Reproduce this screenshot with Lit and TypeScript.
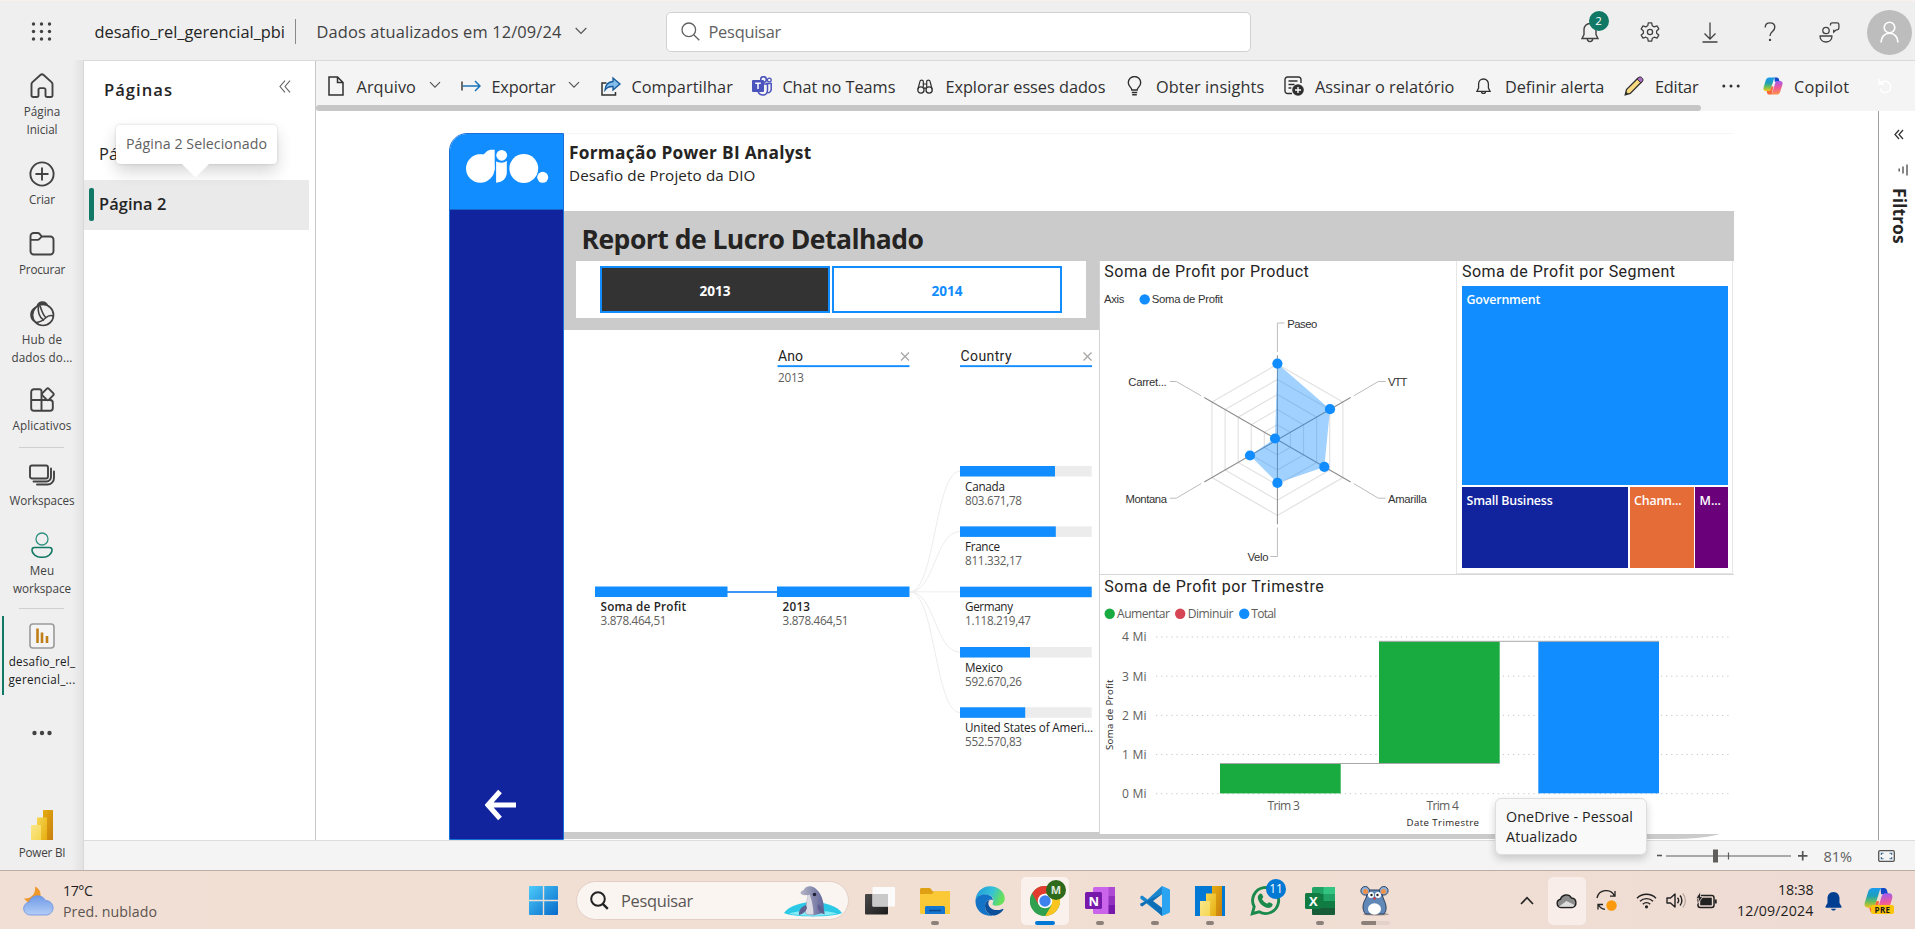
import { LitElement, html, svg, css, TemplateResult, SVGTemplateResult } from "lit";
import { customElement, property } from "lit/decorators.js";

/** A single-line label that spreads its letters over a given width. */
@customElement("fit-text")
class FitText extends LitElement {
  @property() text = "";
  @property({ type: Number }) w = 0;
  static styles = css`
    :host { display: block; white-space: nowrap; flex: none; }
    span { display: inline-block; }
  `;
  render() {
    return html`<span>${this.text}</span>`;
  }
  updated() {
    const s = this.renderRoot.querySelector("span") as HTMLElement;
    s.style.letterSpacing = "0px";
    const natural = s.getBoundingClientRect().width;
    s.style.letterSpacing = (this.w - natural) / this.text.length + "px";
  }
}

const t = (text: string, w: number, cls = "") => html`<fit-text class=${cls} .text=${text} .w=${w}></fit-text>`;

const icon = (w: number, h: number, body: SVGTemplateResult, vb = `0 0 ${w} ${h}`) =>
  html`<svg class="ic" width=${w} height=${h} viewBox=${vb} fill="none">${body}</svg>`;

const G = "#424242";

const railIcons: Record<string, TemplateResult> = {
  home: icon(26, 26, svg`<path d="M2.500 11.300c0-.9.4-1.600 1-2.200L11.400 2c.9-.8 2.300-.8 3.200 0l7.900 7.100c.6.600 1 1.300 1 2.200v10.900c0 1.100-.7 1.800-1.800 1.800h-3.400c-1 0-1.800-.8-1.800-1.800v-5.400c0-1-.7-1.700-1.700-1.700h-3.600c-1 0-1.700.7-1.700 1.700v5.400c0 1-.8 1.800-1.800 1.800H4.300c-1.100 0-1.800-.7-1.800-1.800z" stroke=${G} stroke-width="1.900"/>`),
  create: icon(26, 26, svg`<circle cx="13" cy="13" r="11.600" stroke=${G} stroke-width="1.900"/><path d="M13 7.200v11.600M7.200 13h11.600" stroke=${G} stroke-width="1.900" stroke-linecap="round"/>`),
  browse: icon(26, 26, svg`<path d="M1.500 8.500V5.200A3.200 3.200 0 0 1 4.700 2h3.900c.8 0 1.500.3 2 .9l2.200 2.600h8.500a3.200 3.200 0 0 1 3.200 3.200v11.600a3.200 3.200 0 0 1-3.200 3.200H4.700a3.200 3.200 0 0 1-3.200-3.200z" stroke=${G} stroke-width="1.900"/><path d="M1.500 8.800h7c.8 0 1.500-.3 2-.9l2.300-2.400" stroke=${G} stroke-width="1.800"/>`),
  hub: icon(26, 26, svg`<circle cx="14" cy="14" r="10.500" stroke=${G} stroke-width="1.700"/><path d="M14 3.500A10.500 10.500 0 0 0 7 21.500C4 21 1 18 1.200 13.500 1.500 9 4 6.500 7.500 5.200 8 2 10.500.2 13.500.2S18.500 2 19.500 5.200C18 4 16 3.500 14 3.500z" fill=${G}/><path d="M9.500 5c-1 5 .5 11.500 5.500 14.500M7 21.500c5-.5 6.500-1.500 9.500-4.500 2.500-2.400 5-3 8-2M11 5c2 5 3 9.500 6 11.500" stroke=${G} stroke-width="1.600"/>`),
  apps: icon(26, 26, svg`<path d="M2.200 5a2.800 2.800 0 0 1 2.800-2.800h5.500a2 2 0 0 1 2 2v8.700H2.200zM2.200 13h10.300v10.800H5A2.800 2.800 0 0 1 2.200 21zM12.500 13h8.500a2.800 2.800 0 0 1 2.800 2.800V21a2.800 2.800 0 0 1-2.800 2.800h-8.500z" stroke=${G} stroke-width="1.900"/><rect x="14.200" y="2.700" width="9.200" height="9.200" rx="1.600" transform="rotate(45 18.800 7.300)" fill="#efefef" stroke=${G} stroke-width="1.900"/>`),
  workspaces: icon(26, 26, svg`<rect x="1" y="3.500" width="18" height="13" rx="2" stroke=${G} stroke-width="1.900"/><path d="M4.500 19.500h13a4.500 4.500 0 0 0 4.500-4.500V6.500M8 22.500h10.500a6.500 6.500 0 0 0 6.500-6.500V9.500" stroke=${G} stroke-width="1.900" stroke-linecap="round"/>`),
  me: icon(26, 26, svg`<circle cx="13" cy="7" r="6" stroke="#2e9180" stroke-width="1.300"/><path d="M5.500 15.600h15c1.400 0 2.500 1.100 2.500 2.500 0 4.200-4.700 7.200-10 7.200s-10-3-10-7.200c0-1.400 1.100-2.500 2.500-2.500z" stroke="#117865" stroke-width="1.500"/>`),
  report: icon(26, 26, svg`<rect x="1" y="1" width="24" height="24" rx="3" fill="#f4f4f4" stroke="#9a9a9a" stroke-width="1.600"/><path d="M8.500 5.500V20M13 9.500V20M18 13V20" stroke="#c07f16" stroke-width="2.600"/>`),
};

interface RailItem { key: string; icon: string; lines: [string, number][]; cls: string; sep?: boolean; }
const rail: RailItem[] = [
  { key: "home", icon: "home", lines: [["Página", 36.5], ["Inicial", 31]], cls: "h88" },
  { key: "create", icon: "create", lines: [["Criar", 26]], cls: "h70" },
  { key: "browse", icon: "browse", lines: [["Procurar", 46]], cls: "h70" },
  { key: "hub", icon: "hub", lines: [["Hub de", 40.5], ["dados do...", 61]], cls: "h86" },
  { key: "apps", icon: "apps", lines: [["Aplicativos", 59]], cls: "h60", sep: true },
  { key: "ws", icon: "workspaces", lines: [["Workspaces", 65]], cls: "h70" },
  { key: "me", icon: "me", lines: [["Meu", 24.5], ["workspace", 58]], cls: "h76", sep: true },
  { key: "rep", icon: "report", lines: [["desafio_rel_", 66.5], ["gerencial_...", 67]], cls: "h97 sel" },
];

const chev = icon(12, 8, svg`<path d="M1 1.200l5 5 5-5" stroke="#555" stroke-width="1.200"/>`);

const copilot = (s: number) => html`<svg class="ic" width=${s} height=${s} viewBox="0 0 28 28">
  <defs>
    <linearGradient id="cpa" x1="0" y1="0" x2="0" y2="1"><stop offset="0" stop-color="#1a9bf0"/><stop offset=".4" stop-color="#1e9fb8"/><stop offset=".7" stop-color="#6cbf5a"/><stop offset="1" stop-color="#f4c414"/></linearGradient>
    <linearGradient id="cpb" x1=".3" y1="0" x2=".4" y2="1"><stop offset="0" stop-color="#9a5cf5"/><stop offset=".5" stop-color="#ee5a9c"/><stop offset="1" stop-color="#fb9446"/></linearGradient>
  </defs>
  <path d="M16 2h3.500c1.400 0 2.300 1 2.700 2.300L23.300 8h-6.800z" fill="#1348c8"/>
  <path d="M8.500 2h9.300c-1.300 0-2.200 1-2.700 2.600L11 17.800C10.400 19.800 9.200 21 7.300 21H4C1.200 21 0 18.800.8 16L4 5.500C4.800 3.200 6.300 2 8.500 2z" fill="url(#cpa)"/>
  <path d="M19.500 26h-9.300c1.300 0 2.200-1 2.700-2.600L17 10.200c.6-2 1.800-3.200 3.700-3.200H24c2.800 0 4 2.200 3.200 5L24 22.500c-.8 2.300-2.300 3.500-4.500 3.500z" fill="url(#cpb)"/>
  <path d="M12 26H8.500c-1.400 0-2.300-1-2.700-2.300L5 21h2.300c2 0 3-1.200 3.700-3.200l1-3.300 2.600.2z" fill="#f86a3a"/>
</svg>`;

const K = "#303030";
const tools: { icon: TemplateResult; gap: number; label?: string; w?: number; chev?: boolean; after: number }[] = [
  { icon: icon(16, 20, svg`<path d="M1 1h8.500l5.500 5.500V19H1zM9.500 1v5.500H15" stroke=${K} stroke-width="1.500"/>`), gap: 12.5, label: "Arquivo", w: 59.5, chev: true, after: 21 },
  { icon: icon(20, 12, svg`<path d="M1 1.500v9" stroke=${K} stroke-width="1.400"/><path d="M2 6h17M14 1l5 5-5 5" stroke="#1a73b8" stroke-width="1.500"/>`), gap: 11, label: "Exportar", w: 64, chev: true, after: 21.9 },
  { icon: icon(20, 20, svg`<path d="M5.500 7H1v12h13.500v-3" stroke=${K} stroke-width="1.500"/><path d="M12 2l7 6-7 6v-3.500c-3.500-.2-6 .8-8 3.500.5-5 3.500-8.200 8-8.500z" fill="#83bdea" stroke="#14599a" stroke-width="1.300"/>`), gap: 10.5, label: "Compartilhar", w: 101.5, after: 19.5 },
  { icon: icon(20, 20, svg`<circle cx="11.500" cy="3.500" r="2.800" stroke="#4b53bc" stroke-width="1.500"/><circle cx="17.300" cy="4" r="1.900" stroke="#4b53bc" stroke-width="1.300"/><path d="M14 7.500h5.200v6a3.500 3.500 0 0 1-4 3.300M7 8h8.500v6c0 3-2 5-4.500 5s-4.300-1.500-5-3.500" stroke="#4b53bc" stroke-width="1.500"/><rect y="4" width="12" height="12" rx="1" fill="#4b53bc"/><path d="M3.200 7.200h5.600M6 7.200V13" stroke="#fff" stroke-width="1.500"/>`), gap: 10, label: "Chat no Teams", w: 113, after: 22 },
  { icon: icon(16, 15, svg`<circle cx="3.900" cy="11" r="3.100" stroke=${K} stroke-width="1.300"/><circle cx="12.100" cy="11" r="3.100" stroke=${K} stroke-width="1.300"/><path d="M1 10L3 2.200c.3-1.500 3-1.500 3.300 0v6M15 10L13 2.200c-.3-1.500-3-1.500-3.300 0v6M6.300 5h3.400M6.800 9.500c.8-.7 1.600-.7 2.400 0" stroke=${K} stroke-width="1.200"/>`), gap: 12, label: "Explorar esses dados", w: 160, after: 22 },
  { icon: icon(15, 20, svg`<path d="M4.800 14c0-2.500-3.500-3.500-3.500-7.300a6.200 6.200 0 0 1 12.400 0c0 3.800-3.500 4.800-3.500 7.300zM4.800 16.500h5.400M5.200 18.800h4.600" stroke=${K} stroke-width="1.400"/>`), gap: 13.5, label: "Obter insights", w: 108.5, after: 19.5 },
  { icon: icon(20, 20, svg`<path d="M8 17.500H3.500A2.500 2.500 0 0 1 1 15V3.500A2.500 2.500 0 0 1 3.500 1h11A2.500 2.500 0 0 1 17 3.500V7M4.500 5h9M4.500 8.500h6M4.500 12h2.800" stroke=${K} stroke-width="1.400"/><circle cx="14" cy="14" r="5.800" fill=${K}/><path d="M14 11v6M11 14h6" stroke="#fff" stroke-width="1.400"/>`), gap: 11, label: "Assinar o relatório", w: 139.5, after: 22 },
  { icon: icon(15, 17, svg`<path d="M7.500 1C4.500 1 2.600 3.200 2.600 6v4L1 13.300h13L12.400 10V6c0-2.800-1.900-5-4.900-5zM5.500 13.500c0 2.600 4 2.600 4 0" stroke=${K} stroke-width="1.300"/>`), gap: 13.5, label: "Definir alerta", w: 99.5, after: 19.5 },
  { icon: icon(20, 20, svg`<path d="M1.200 18.800l1.300-5.200L13.800 2.300c1.900-1.900 5.600 1.800 3.700 3.700L6.300 17.400z" fill="#f8d980" stroke=${K} stroke-width="1.300"/><path d="M13 3l2-1.800c2-1.200 4.900 1.700 3.700 3.700L17 7z" fill="#a86bc0" stroke=${K} stroke-width="1"/><path d="M1 19l1-3.500L4.500 18z" fill=${K}/>`), gap: 11, label: "Editar", w: 43.5, after: 23.5 },
  { icon: icon(18, 4, svg`<circle cx="1.800" cy="2" r="1.500" fill=${K}/><circle cx="9" cy="2" r="1.500" fill=${K}/><circle cx="16.200" cy="2" r="1.500" fill=${K}/>`), gap: 0, after: 23 },
  { icon: copilot(20), gap: 11, label: "Copilot", w: 55.5, after: 27.5 },
  { icon: icon(16, 16, svg`<path d="M2 1v5h5M2 6c3-3.500 8-3.500 10.500-.5 2.700 3.500 1 8.500-3.500 9-3 .3-5-1.500-5.500-4" stroke="#fff" stroke-width="1.400"/>`), gap: 0, after: 0 },
];

/* SVG text pinned to a start point and a measured length */
const st = (x: number, y: number, s: string, w: number, cls: string) =>
  svg`<text class=${cls} x=${x} y=${y} textLength=${w} lengthAdjust="spacing">${s}</text>`;

@customElement("decomposition-tree")
class DecompositionTree extends LitElement {
  static styles = css`
    :host { display: block; background: #fff; }
    svg { display: block; }
    text { font-family: "Open Sans", "Noto Sans", sans-serif; font-size: 11.700px; fill: #252423; }
    .v { fill: #605e5c; }
    .b { font-weight: 600; }
    .din { font-family: Roboto, sans-serif; font-size: 14px; }
  `;
  nodes = [
    { y: 466, name: "Canada", nw: 40, val: "803.671,78", vw: 57, fill: 95 },
    { y: 526.4, name: "France", nw: 35, val: "811.332,17", vw: 57, fill: 95.8 },
    { y: 586.7, name: "Germany", nw: 48, val: "1.118.219,47", vw: 66, fill: 132 },
    { y: 647, name: "Mexico", nw: 38, val: "592.670,26", vw: 57, fill: 70 },
    { y: 707.3, name: "United States of Ameri...", nw: 128, val: "552.570,83", vw: 57, fill: 65.2 },
  ];
  head(x: number, name: string, w: number) {
    return svg`${st(x + 0.5, 360.5, name, w, "din")}
      <rect x=${x} y="365.200" width="132" height="1.900" fill="#118dff"/>
      <path d=${`M${x + 123.5} 352.500l8 8m0-8l-8 8`} stroke="#a8a6a4" stroke-width="1.300"/>`;
  }
  root(x: number, name: string, w: number) {
    return svg`<rect x=${x} y="586.500" width="132.500" height="10.500" fill="#118dff"/>
      ${st(x + 5.5, 611.3, name, w, "b")}${st(x + 5.5, 625.3, "3.878.464,51", 66, "v")}`;
  }
  render() {
    return html`<svg width="535" height="502" viewBox="564 330 535 502" fill="none">
      ${this.head(777.5, "Ano", 25)}${this.head(960, "Country", 51)}
      ${st(778, 382.3, "2013", 26, "v")}
      ${this.nodes.map((n) => svg`<path d=${`M910 591.800C935 591.800 935 ${n.y + 5.2} 960 ${n.y + 5.2}`} stroke="#ededed"/>
        <rect x="960" y=${n.y} width="131.700" height="10.500" fill="#ececec"/>
        <rect x="960" y=${n.y} width=${Math.min(n.fill, 131.7)} height="10.500" fill="#118dff"/>
        ${st(965, n.y + 24.6, n.name, n.nw, "")}${st(965, n.y + 38.5, n.val, n.vw, "v")}`)}
      <path d="M727 592h51" stroke="#3a97f5" stroke-width="1.800"/>
      ${this.root(595, "Soma de Profit", 85.5)}${this.root(777, "2013", 27.5)}
    </svg>`;
  }
}

@customElement("radar-chart")
class RadarChart extends LitElement {
  static styles = css`
    :host { display: block; background: #fff; }
    svg { display: block; }
    text { font-family: "Liberation Sans", Arial, sans-serif; font-size: 11.300px; fill: #333; }
    .din { font-family: Roboto, sans-serif; font-size: 16px; fill: #252423; }
  `;
  hex(r: number) {
    return [0, 1, 2, 3, 4, 5].map((i) => {
      const a = (i * Math.PI) / 3;
      return `${1277.4 + r * Math.sin(a)},${439.8 - r * Math.cos(a)}`;
    }).join(" ");
  }
  render() {
    const pts = [[1277.4, 363.6], [1330, 409.2], [1324.3, 466.9], [1277.4, 482.9], [1250, 455.5], [1275, 438.5]];
    return html`<svg width="357" height="312" viewBox="1099 261 357 312" fill="none">
      ${st(1104.3, 277.2, "Soma de Profit por Product", 204.5, "din")}
      ${st(1104, 302.5, "Axis", 20.3, "")}<circle cx="1144.700" cy="299.400" r="5.200" fill="#118dff"/>${st(1151.7, 302.5, "Soma de Profit", 71.3, "")}
      ${[15.1, 30.2, 45.3, 60.4, 75.6].map((r) => svg`<polygon points=${this.hex(r)} stroke="#e0e0e0" stroke-width="1.100"/>`)}
      ${[0, 60, 120, 180, 240, 300].map((d) => svg`<path d="M1277.400 439.800v-84.500" transform=${`rotate(${d} 1277.400 439.800)`} stroke="#8c8c8c"/>`)}
      <polygon points=${pts.map((p) => p.join(",")).join(" ")} fill="#118dff" fill-opacity=".4"/>
      ${pts.map((p) => svg`<circle cx=${p[0]} cy=${p[1]} r="5.100" fill="#118dff"/>`)}
      <path d="M1277.400 352v-29h7M1353.700 395.900l24.600-14.400h7.400M1353.700 483.500l24.600 14.700h7.400M1277.400 527.500v29h-7M1201.300 483.500l-25 14.700h-6.500M1201.300 395.900l-25-14.400h-6.500" stroke="#bdbdbd"/>
      ${st(1287.3, 327.6, "Paseo", 30, "")}${st(1388, 385.6, "VTT", 19.5, "")}${st(1388, 502.5, "Amarilla", 38.7, "")}
      ${st(1247.5, 560.5, "Velo", 21, "")}${st(1125.5, 502.5, "Montana", 41.5, "")}${st(1128.3, 385.6, "Carret...", 38.4, "")}
    </svg>`;
  }
}

@customElement("segment-treemap")
class SegmentTreemap extends LitElement {
  static styles = css`
    :host { display: flex; flex-direction: column; box-sizing: border-box; background: #fff; border: 1px solid #e6e6e6; border-top: 0; padding: 0 4.500px 5px 5px; font-family: "Open Sans", "Noto Sans", sans-serif; }
    .title { font: 16px/19px Roboto, sans-serif; color: #252423; height: 25px; padding-top: 1px; box-sizing: border-box; }
    .big { height: 199.500px; background: #118dff; }
    .row { display: flex; gap: 1.500px; margin-top: 2px; height: 81.500px; }
    .cell { padding: 5px 0 0 4.500px; box-sizing: border-box; color: #fff; font-size: 12.400px; line-height: 17px; font-weight: 600; }
    .sb { width: 166px; background: #12239e; }
    .cp { width: 64px; background: #e66c37; }
    .mm { flex: 1; background: #6b007b; }
  `;
  render() {
    return html`${t("Soma de Profit por Segment", 213, "title")}
      <div class="cell big">${t("Government", 73.7)}</div>
      <div class="row">
        <div class="cell sb">${t("Small Business", 86)}</div>
        <div class="cell cp">${t("Chann...", 47.5)}</div>
        <div class="cell mm">${t("M...", 21.5)}</div>
      </div>`;
  }
}

@customElement("waterfall-chart")
class WaterfallChart extends LitElement {
  static styles = css`
    :host { display: block; background: #fff; }
    svg { display: block; }
    text { font-family: "Open Sans", "Noto Sans", sans-serif; font-size: 12.100px; fill: #605e5c; }
    .din { font-family: Roboto, sans-serif; font-size: 16px; fill: #252423; }
    .ax { font-size: 9.600px; fill: #252423; font-weight: 500; }
  `;
  render() {
    const rows: [number, string][] = [[637, "4 Mi"], [676.2, "3 Mi"], [715.4, "2 Mi"], [754.5, "1 Mi"], [793.7, "0 Mi"]];
    return html`<svg width="635" height="259" viewBox="1099 575 635 259" fill="none">
      ${st(1104.3, 591.5, "Soma de Profit por Trimestre", 219.5, "din")}
      <circle cx="1109.700" cy="613.800" r="5.200" fill="#1aab40"/>${st(1117, 618.2, "Aumentar", 53, "")}
      <circle cx="1180.200" cy="613.800" r="5.200" fill="#d64554"/>${st(1187.7, 618.2, "Diminuir", 45.7, "")}
      <circle cx="1244.200" cy="613.800" r="5.200" fill="#118dff"/>${st(1251.3, 618.2, "Total", 25, "")}
      ${rows.map(([y, l]) => svg`${st(1122, y + 4.3, l, 24.5, "")}<path d=${`M1156 ${y}h574`} stroke="#c8c8c8" stroke-dasharray="1.300 3.800"/>`)}
      <rect x="1220" y="763.400" width="120.700" height="30" fill="#1aab40"/>
      <rect x="1379" y="641.300" width="120.700" height="122" fill="#1aab40"/>
      <rect x="1538.300" y="641.300" width="120.700" height="152" fill="#118dff"/>
      <path d="M1220 763.500h279.700M1379 641.300h280" stroke="#a9a9a9"/>
      ${st(1267.5, 810.3, "Trim 3", 32.5, "")}${st(1426.5, 810.3, "Trim 4", 32.5, "")}
      ${st(1406.5, 826.3, "Date Trimestre", 72.5, "ax")}
      <g transform="translate(1112.800 750) rotate(-90)">${st(0, 0, "Soma de Profit", 70.5, "ax")}</g>
    </svg>`;
  }
}

const pbi = (w: number, h: number) => html`<svg class="ic" width=${w} height=${h} viewBox="0 0 22 30">
  <defs><linearGradient id="p1" x1="0" y1="0" x2="1" y2="1"><stop stop-color="#e6ad10"/><stop offset="1" stop-color="#c87e0e"/></linearGradient>
  <linearGradient id="p2" x1="0" y1="0" x2="1" y2="1"><stop stop-color="#f6d751"/><stop offset="1" stop-color="#e6ad10"/></linearGradient>
  <linearGradient id="p3" x1="0" y1="0" x2="1" y2="1"><stop stop-color="#f9e589"/><stop offset="1" stop-color="#f6d751"/></linearGradient></defs>
  <rect x="12" width="10" height="30" fill="url(#p1)"/><rect x="6" y="7.500" width="10" height="22.500" fill="url(#p2)"/><rect y="15" width="10" height="15" fill="url(#p3)"/></svg>`;

const apps: { body: TemplateResult; mark?: string; cls?: string }[] = [
  { body: icon(30, 30, svg`<defs><linearGradient id="tv" x1="0" y1="0" x2="1" y2="1"><stop stop-color="#4a4a4a"/><stop offset="1" stop-color="#1c1c1c"/></linearGradient></defs><rect y="8" width="23" height="20.500" rx="1" fill="url(#tv)"/><rect x="7.500" y="1" width="22.500" height="19.500" rx="1" fill="#fbfbfb"/><rect x="7.500" y="8" width="15.500" height="12.500" fill="#c9c9c9"/>`) },
  { mark: "dot", body: icon(30, 30, svg`<path d="M0 3.500C0 2.500.8 2 1.600 2h8.400l3 3.500h15.400c1 0 1.600.6 1.600 1.600V12H0z" fill="#e0a014"/><path d="M0 8h12l2.500-2.800H30V28H1.500C.6 28 0 27.400 0 26.500z" fill="#fcc936"/><path d="M5 21.500c0-1 .8-1.500 1.800-1.500h16.400c1 0 1.800.5 1.800 1.500V28H5z" fill="#1577d0"/><path d="M9 24.500h12" stroke="#0b4a8f" stroke-width="1.600"/>`) },
  { body: icon(30, 30, svg`<defs><linearGradient id="ed" x1="0" y1="0" x2="1" y2=".3"><stop stop-color="#1f95dc"/><stop offset=".6" stop-color="#35c1d8"/><stop offset="1" stop-color="#66e05a"/></linearGradient></defs><path d="M.5 14.500C.8 6.500 7 .3 15 .3c8.500 0 14.700 5.700 14.700 12 0 4.700-3.700 7.500-8 7.500-3.700 0-4.700-1.300-4-2.600 2-3.700-.5-8.400-6.500-8.400-5.500 0-9.700 2.300-10.700 5.700z" fill="url(#ed)"/><path d="M.5 14.500c.8-3.700 5-6 9.500-6 5 0 8 2.500 7.800 5.700C13.500 12.500 9.500 16 10 21c.4 4.300 3.500 7.500 8 8.400C8 31.500 0 24 .5 14.500z" fill="#1373c6"/><path d="M10.500 17c-1.500 4.500.5 10 6 12.300 5 .8 9.200-1.800 11.800-5.600.4-.7-.2-1.100-.8-.8-7 3.200-14-.5-14.200-5.500 0-1.600.6-2.800 1.700-3.500-2 .2-3.700 1.300-4.500 3.100z" fill="#0c4f9a"/>`) },
  { cls: "active", mark: "line", body: html`<span class="stack">${icon(30, 30, svg`<circle cx="15" cy="15" r="15" fill="#30a14e"/><path d="M15 15L2 7.500A15 15 0 0 1 28 7.500H15z" fill="#e33b2e"/><path d="M28 7.500A15 15 0 0 1 15 30l6.500-11.200L15 7.500z" fill="#fbc520"/><path d="M2 7.500l6.500 11.200L15 15V7.500H2z" fill="#e33b2e"/><path d="M2 7.500A15 15 0 0 0 15 30l6.500-11.200L8.500 18.800z" fill="#30a14e"/><circle cx="15" cy="15" r="7.300" fill="#fff"/><circle cx="15" cy="15" r="5.700" fill="#3f82ee"/>`)}<b class="bdg m">M</b></span>` },
  { mark: "dot", body: html`<span class="stack">${icon(30, 27, svg`<rect x="8" width="22" height="27" rx="1.500" fill="#ca64ea"/><path d="M23.500 0H30v9h-6.500z" fill="#ae4bd5"/><path d="M23.500 9H30v9h-6.500z" fill="#9332bf"/><path d="M23.500 18H30v9h-6.500z" fill="#7719aa"/><rect y="5" width="17" height="17" rx="1.500" fill="#7719aa"/>`)}<i class="ltr n">N</i></span>` },
  { mark: "dot", body: icon(30, 30, svg`<path d="M22 0L7.500 13.500 2.300 9.400.300 10.400v2L22 29.800z" fill="#1a86cd"/><path d="M22 30L7.500 16.500l-5.200 4.100L.3 19.600v-2L22 8z" fill="#0f6fb6"/><path d="M22 0l7 3c.7.300 1 .8 1 1.500v21c0 .7-.3 1.200-1 1.500l-7 3z" fill="#2aa4f0"/><path d="M22 8.200v13.600L13 15z" fill="#f1ded4"/>`) },
  { mark: "dot", body: html`<span class="pbx">${pbi(25, 25)}</span>` },
  { body: html`<span class="stack">${icon(31, 31, svg`<path d="M2.300 28.700l1.900-7A13 13 0 1 1 9.200 26.800z" stroke="#1a8a4c" stroke-width="2.900"/><path d="M9.300 9.200c1-1.200 2.300-1 2.900.2l1 2.300c.3.700-.9 1.600-1.200 2.300 1.200 2.300 2.700 3.700 5 4.600.8-.2 1.500-1.700 2.300-1.400l2.600 1.200c.9.500.9 1.200.4 2.300-1 2.200-3.800 2.700-6.400 1.700-4-1.500-6.700-4.400-7.800-7.900-.7-2.200-.2-4 1.200-5.300z" fill="#1a8a4c"/>`)}<b class="bdg w">11</b></span>` },
  { mark: "dot", body: html`<span class="stack">${icon(30, 28, svg`<rect x="7" width="23" height="28" rx="1.500" fill="#21a366"/><path d="M18.500 0H30v7H18.500z" fill="#33c481"/><path d="M7 7h11.500v7H7z" fill="#107c41"/><path d="M7 14h23v7H7z" fill="#107c41"/><path d="M7 21h23v5.500c0 .9-.6 1.500-1.500 1.500h-20C7.600 28 7 27.400 7 26.500z" fill="#185c37"/><rect y="6" width="16" height="16" rx="1.500" fill="#107c41"/>`)}<i class="ltr x">X</i></span>` },
  { mark: "half", body: icon(30, 30, svg`<ellipse cx="16" cy="28.200" rx="13" ry="1.500" fill="#b09f98"/><path d="M7.500 4h14c1 3 .5 6 2.500 10s3.500 10 0 14H5.500C2 24 2.500 18 5 14S6.500 7 7.500 4z" fill="#6288b8" stroke="#29405e" stroke-width="1"/><circle cx="5.200" cy="4.800" r="4.300" fill="#8fb0d8" stroke="#29405e"/><circle cx="23.800" cy="4.800" r="4.300" fill="#8fb0d8" stroke="#29405e"/><circle cx="5.500" cy="5.500" r="2.500" fill="#f0914a"/><circle cx="23.500" cy="5.500" r="2.500" fill="#f0914a"/><circle cx="11" cy="9" r="3" fill="#fff"/><circle cx="18" cy="9" r="3" fill="#fff"/><circle cx="11.500" cy="9" r="1.200" fill="#222"/><circle cx="17.500" cy="9" r="1.200" fill="#222"/><circle cx="14.500" cy="12.500" r="1.200" fill="#d33"/><ellipse cx="14.500" cy="23" rx="6.500" ry="5.700" fill="#fff"/>`) },
];

@customElement("app-root")
class AppRoot extends LitElement {
  static styles = css`
    :host { display: flex; flex-direction: column; width: 1915px; height: 929px; overflow: hidden; background: #fff; font-family: "Open Sans", "Noto Sans", sans-serif; color: #242424; }
    * { box-sizing: border-box; }
    .ic { display: block; flex: none; }
    .row { display: flex; align-items: center; }

    .header { display: flex; align-items: center; height: 60px; flex: none; background: #efefef; border-top: 1px solid #fbf0ec; font-size: 16.400px; line-height: 24px; }
    .waffle { margin: 2px 0 0 31px; width: 63.500px; }
    .name { margin-top: 2px; color: #242424; }
    .vr { width: 1px; height: 25px; background: #8a8a8a; margin: 2px 21px 0 9.500px; }
    .upd { color: #424242; margin: 2px 13px 0 0; }
    .search { display: flex; align-items: center; width: 584.500px; height: 40px; margin: 2px 0 0 79.500px; background: #fff; border: 1px solid #d1d1d1; border-radius: 5px; padding-left: 14px; gap: 8.500px; color: #616161; }
    .search fit-text { padding-top: 1px; }
    .acts { display: flex; margin-left: auto; height: 60px; align-items: center; padding-top: 3px; }
    .act { width: 60px; display: flex; justify-content: center; position: relative; }
    .act:last-child { width: 55.500px; padding-left: 4.500px; }
    .two { position: absolute; left: 29px; top: -11px; width: 20px; height: 20px; border-radius: 50%; background: #117865; color: #fff; font-size: 11.500px; line-height: 20px; text-align: center; }

    .body { display: flex; flex: none; height: 810px; }
    .rail { width: 84px; flex: none; background: linear-gradient(90deg, #efefef 72px, #e2e2e2 83px, #cfcfcf 84px); padding-top: 13px; display: flex; flex-direction: column; align-items: stretch; }
    .ritem { display: flex; flex-direction: column; align-items: center; font-size: 11.700px; line-height: 17.500px; color: #424242; position: relative; flex: none; }
    .ritem .ic { margin-bottom: 4px; }
    .h88 { height: 88px; } .h70 { height: 70px; } .h86 { height: 86px; } .h60 { height: 60px; } .h76 { height: 76px; } .h97 { height: 97px; }
    .rsep { height: 15px; flex: none; width: 45px; margin-left: 19px; border-top: 1px solid #cfcfcf; }
    .sel { color: #1c1c1c; }
    .sel::before { content: ""; position: absolute; left: 2px; top: -7px; width: 2px; height: 79px; background: #117865; }
    .rdots { display: flex; justify-content: center; padding-top: 10px; }
    .rpbi { margin-top: auto; height: 60px; display: flex; flex-direction: column; align-items: center; font-size: 11.700px; line-height: 17px; color: #424242; }
    .rpbi .ic { margin-bottom: 3.500px; }

    .work { flex: 1; display: flex; flex-direction: column; border-top: 1px solid #d9d9d9; }
    .mid { display: flex; height: 779px; flex: none; }
    .pages { width: 232px; flex: none; border-right: 1px solid #c8c8c8; background: #fff; position: relative; }
    .ptop { display: flex; height: 69px; padding: 17px 24px 0 20px; justify-content: space-between; font-size: 16.600px; line-height: 24px; font-weight: 600; }
    .ptop .ic { margin-top: 2px; }
    .page { display: flex; align-items: center; height: 50px; padding: 0 0 4px 15px; font-size: 16.400px; }
    .page.on { width: 225px; background: #eaeaea; font-weight: 600; padding: 0 0 3px 5px; }
    .on .mark { width: 4.500px; height: 33px; border-radius: 2px; background: #117865; margin-right: 5.500px; margin-top: 2px; }
    .tip { position: absolute; left: 32px; top: 64px; width: 161px; height: 39px; background: #fff; border-radius: 4px; box-shadow: 0 0 3px rgba(0,0,0,.15), 0 8px 16px rgba(0,0,0,.16); font-size: 14.200px; line-height: 37px; color: #616161; padding-left: 10px; }
    .tip svg { position: absolute; left: 66px; top: 38.500px; }

    .main { flex: 1; display: flex; flex-direction: column; }
    .tools { height: 50px; background: #f4f4f4; display: flex; flex-direction: column; justify-content: space-between; flex: none; }
    .tl { display: flex; align-items: center; height: 44px; padding: 6px 0 0 12px; font-size: 16.300px; line-height: 24px; color: #303030; }
    .tl .ch { margin-left: 12.500px; width: 11px; margin-top: -2px; }
    .tool { display: flex; align-items: center; flex: none; }
    .tool fit-text { margin-top: 1px; }
    .thumb { height: 6px; width: 1385px; background: #c6c6c6; border-radius: 3px; }
    .stage { display: flex; flex: 1; }
    .canvas { flex: 1; padding: 22px 0 0 133px; display: flex; }
    .side { width: 115px; height: 707px; display: flex; flex-direction: column; border-radius: 18px 0 0 0; overflow: hidden; border: 1px solid #1670d8; }
    .logo { height: 76px; background: #118dff; border-bottom: 1px solid #1666c8; }
    .navy { flex: 1; background: #12239e; padding: 579px 0 0 35px; }
    .report { width: 1170px; }
    .rhead { height: 78px; border-top: 1px solid #f6f6f6; padding: 5px 0 0 5px; }
    .r1 { font-size: 17.300px; line-height: 27px; font-weight: 700; color: #252423; }
    .r2 { font-size: 15.200px; line-height: 21px; color: #252423; margin-top: -1px; }
    .gray { height: 628px; background: #cbcbcb; border-radius: 0 0 60px 0 / 0 0 14px 0; display: flex; flex-direction: column; }
    .gt { height: 50px; flex: none; padding: 9px 0 0 17.500px; font-size: 26.500px; line-height: 38px; font-weight: 700; color: #252423; }
    .cols { display: flex; }
    .left { width: 535px; }
    .slicer { margin: 0 0 12px 12px; width: 510px; height: 57px; background: #fff; display: flex; gap: 2px; padding: 5px 24px; }
    .sb { flex: 1; height: 47px; border: 2px solid #118dff; color: #118dff; background: #fff; display: flex; align-items: center; justify-content: center; font-size: 13.600px; font-weight: 700; padding-top: 1px; }
    .sb.on { background: #333; color: #fff; }
    .right { width: 635px; background: #fff; border-left: 1px solid #d4d4d4; }
    .top2 { display: flex; height: 314px; border-bottom: 1px solid #d6d6d6; width: 634px; }
    .top2 radar-chart { width: 357px; height: 313px; margin-left: -1px; flex: none; background: none; }
    segment-treemap { width: 277px; height: 313px; }
    waterfall-chart { margin-left: -1px; background: none; height: 259px; }
    .filters { width: 37px; border-left: 1px solid #a0a0a0; display: flex; flex-direction: column; align-items: flex-start; padding: 18px 0 0 15px; }
    .filters .fi { margin: 24px 0 12px 3.500px; }
    .fl { writing-mode: vertical-rl; font-size: 17.500px; line-height: 18px; font-weight: 700; color: #252423; margin-left: -3px; height: 60px; letter-spacing: .05px; }

    .status { flex: 1; background: #f4f4f4; border-top: 1px solid #dcdcdc; display: flex; align-items: center; justify-content: flex-end; padding-right: 20px; font-size: 14.600px; color: #616161; }
    .status .pc { margin: 0 26px 0 16px; }

    .taskbar { flex: none; height: 59px; border-top: 1px solid #bcada6; background: linear-gradient(90deg, #f1dfd5, #f2dfd3 50%, #eedbd3); display: flex; align-items: center; font-size: 14.200px; line-height: 21px; padding-top: 1px; position: relative; color: #1f1f1f; }
    .weather { width: 516px; display: flex; padding-left: 23px; gap: 9px; align-items: center; }
    .sub { color: #5c5450; }
    .start { width: 60px; padding-left: 13px; }
    .pill { width: 273px; height: 39px; border-radius: 20px; background: #fbf5f1; border: 1px solid #e3cfc6; display: flex; align-items: center; padding-left: 13px; font-size: 16.400px; color: #5a5654; margin-right: 3.500px; }
    .pill fit-text { margin-left: 12px; }
    .pill .dolphin { margin-left: auto; margin-right: 6px; }
    .app { width: 55px; height: 57px; display: flex; align-items: center; justify-content: center; position: relative; }
    .app.active::before { content: ""; position: absolute; left: 3.500px; top: 5px; width: 48px; height: 48px; background: #faf1ec; border-radius: 5px; }
    .app > * { position: relative; }
    .app .mk { position: absolute; top: 49px; height: 4px; border-radius: 2px; width: 8px; left: 23.500px; background: #8b807a; }
    .app .mk.line { width: 20px; left: 17.500px; background: #0078d4; }
    .app .mk.half { width: 29px; left: 13px; background: linear-gradient(90deg, #8b807a 15px, #e3d2c9 15px); }
    .stack { position: relative; display: block; }
    .bdg { position: absolute; border-radius: 50%; width: 20px; height: 20px; color: #fff; text-align: center; line-height: 20px; font-size: 11.500px; }
    .m { background: #2e6a1c; left: 16px; top: -6px; font-size: 11px; color: #dfe9da; }
    .w { background: #0078d4; left: 16.500px; top: -6px; font-weight: 400; font-size: 12px; }
    .ltr { position: absolute; color: #fff; font-style: normal; font-weight: 700; font-size: 13px; line-height: 16px; }
    .n { left: 3.500px; top: 5.500px; } .x { left: 4px; top: 6px; }
    .pbx { width: 30px; height: 30px; background: #0078d4; display: flex; align-items: flex-end; justify-content: flex-end; overflow: hidden; }
    .pbx .ic { width: 28px; height: 30px; }
    .tray { display: flex; align-items: center; margin-left: 104px; height: 57px; }
    .tc { display: flex; justify-content: center; align-items: center; flex: none; }
    .w41 { width: 41px; } .w38 { width: 38px; } .w42 { width: 46px; padding-right: 4px; } .w30 { width: 30px; } .w52 { width: 52px; }
    .lit { background: #f8ede8; height: 48px; border-radius: 5px; }
    .clock { width: 92px; margin-right: 1px; display: flex; flex-direction: column; align-items: flex-end; line-height: 20.500px; }
    .pre { position: absolute; left: 7px; top: 19px; width: 23px; height: 9px; border-radius: 2px; background: #fdc50a; color: #1a1a1a; font-size: 8px; line-height: 9px; text-align: center; letter-spacing: .4px; }
    .onedrive { position: absolute; left: 1495px; top: -73px; width: 152px; height: 57px; background: #f9f9f9; border: 1px solid #dedede; border-radius: 6px; box-shadow: 0 4px 8px rgba(0,0,0,.18); padding: 8px 0 0 10px; font-size: 14.300px; line-height: 20px; color: #1f1f1f; }
  `;

  render() {
    return html`
      <div class="header">
        <div class="waffle">${icon(21, 21, svg`${[2.5, 10.5, 18.5].map((x) => [2.5, 10, 17.5].map((y) => svg`<circle cx=${x} cy=${y + 0.5} r="1.700" fill="#424242"/>`))}`)}</div>
        ${t("desafio_rel_gerencial_pbi", 190.5, "name")}
        <div class="vr"></div>
        ${t("Dados atualizados em 12/09/24", 245, "upd")}
        ${icon(12, 8, svg`<path d="M.7 1l5.300 5.300L11.300 1" stroke="#555" stroke-width="1.200"/>`)}
        <div class="search">
          ${icon(19, 19, svg`<circle cx="7.800" cy="7.800" r="6.800" stroke="#616161" stroke-width="1.300"/><path d="M12.700 12.700l5.600 5.600" stroke="#616161" stroke-width="1.300"/>`)}
          ${t("Pesquisar", 72.5)}
        </div>
        <div class="acts">
          <div class="act">${icon(18, 21, svg`<path d="M9 1.500C5.500 1.500 3 4.200 3 7.500v5L1 16.500h16l-2-4v-5c0-3.300-2.500-6-6-6zM6.300 16.800c0 3.700 5.400 3.700 5.400 0" stroke="#424242" stroke-width="1.400"/>`)}<span class="two">2</span></div>
          <div class="act">${icon(22, 22, svg`<path d="M9.300 1h3.400l.6 2.900 1.900 1.100 2.800-1 1.800 3-2.200 2v2.300l2.200 1.900-1.800 3-2.800-.9-1.900 1.100-.6 2.900H9.300l-.6-2.900-1.900-1.100-2.800.9-1.800-3 2.200-1.900V9L2.200 7 4 4l2.800 1 1.900-1.100z" transform="translate(0 .900)" stroke="#424242" stroke-width="1.300" stroke-linejoin="round"/><circle cx="11" cy="11" r="2.600" stroke="#424242" stroke-width="1.300"/>`)}</div>
          <div class="act">${icon(18, 21, svg`<path d="M9 .5v16M3.500 11.500L9 17l5.500-5.500M1.500 20h15" stroke="#424242" stroke-width="1.300"/>`)}</div>
          <div class="act">${icon(12, 20, svg`<path d="M1.200 5.500C1.200 2.500 3.200.9 6 .9s4.800 1.700 4.800 4.400c0 2.300-1.300 3.300-2.600 4.500C6.900 11 6 11.800 6 13.900" stroke="#424242" stroke-width="1.400"/><circle cx="6" cy="17.900" r="1.200" fill="#424242"/>`)}</div>
          <div class="act">${icon(21, 21, svg`<circle cx="7" cy="8.500" r="3.200" stroke="#424242" stroke-width="1.300"/><path d="M1 14h12c0 8-12 8-12 0z" stroke="#424242" stroke-width="1.300" stroke-linejoin="round"/><path d="M11.500 3.500V2.500c0-1 .7-1.700 1.700-1.700h5c1 0 1.700.7 1.700 1.700v3.600c0 1-.7 1.700-1.700 1.700h-.8l-2.700 2.300V7.800" stroke="#424242" stroke-width="1.300"/>`)}</div>
          <div class="act">${icon(45, 45, svg`<circle cx="22.500" cy="22.500" r="22.500" fill="#bdbdbd"/><circle cx="22.500" cy="17.500" r="5.300" stroke="#fff" stroke-width="1.600"/><path d="M14 32.500c0-5.300 3.500-9.300 8.500-9.300s8.500 4 8.500 9.300" stroke="#fff" stroke-width="1.600"/>`)}</div>
        </div>
      </div>

      <div class="body">
        <div class="rail">
          ${rail.map((r) => html`<div class="ritem ${r.cls}">${railIcons[r.icon]}${r.lines.map(([s, w]) => t(s, w))}</div>${r.sep ? html`<div class="rsep"></div>` : ""}`)}
          <div class="rdots">${icon(20, 6, svg`<circle cx="2.500" cy="3" r="2.200" fill="#424242"/><circle cx="10" cy="3" r="2.200" fill="#424242"/><circle cx="17.500" cy="3" r="2.200" fill="#424242"/>`)}</div>
          <div class="rpbi">${pbi(22, 30)}${t("Power BI", 46.5)}</div>
        </div>
        <div class="work">
          <div class="mid">
            <div class="pages">
              <div class="ptop">${t("Páginas", 69)}${icon(12, 13, svg`<path d="M6 .7L1 6.500l5 5.800M11 .7L6 6.500l5 5.800" stroke="#616161" stroke-width="1.100"/>`)}</div>
              <div class="page">${t("Página 1", 65)}</div>
              <div class="page on"><div class="mark"></div>${t("Página 2", 67.5)}</div>
              <div class="tip">${t("Página 2 Selecionado", 141)}<svg width="27" height="14" viewBox="0 0 27 14"><path d="M0 0h27L13.500 13.500z" fill="#fff"/></svg></div>
            </div>
            <div class="main">
              <div class="tools">
                <div class="tl">
                  ${tools.map((x) => html`<div class="tool" style="margin-right:${x.after}px;gap:${x.gap}px">${x.icon}${x.label ? html`<div class="row">${t(x.label, x.w!)}${x.chev ? html`<div class="ch">${chev}</div>` : ""}</div>` : ""}</div>`)}
                </div>
                <div class="thumb"></div>
              </div>
              <div class="stage">
                <div class="canvas">
                  <div class="side">
                    <div class="logo">${icon(113, 75, svg`<g fill="#fff"><circle cx="30.300" cy="34.500" r="14.300"/><path d="M26 20.800h7c3-1.500 3.500-4.800 8-5h3.700V36L36 42z"/><circle cx="51.700" cy="21.300" r="5.400"/><path d="M46.100 27.200c3 2 8.300 2 10.700-.4V38.500c0 5.500-4 9.500-10.700 10.300z"/><circle cx="73.800" cy="34.500" r="14.400"/><circle cx="92.700" cy="43.300" r="5.500"/></g>`)}</div>
                    <div class="navy">${icon(32, 32, svg`<path d="M31 16H4M15 2.500L3 16l12 13.500" stroke="#fff" stroke-width="5"/>`)}</div>
                  </div>
                  <div class="report">
                    <div class="rhead">${t("Formação Power BI Analyst", 242.5, "r1")}${t("Desafio de Projeto da DIO", 186.5, "r2")}</div>
                    <div class="gray">
                      <div class="gt">${t("Report de Lucro Detalhado", 342)}</div>
                      <div class="cols">
                        <div class="left">
                          <div class="slicer"><div class="sb on">${t("2013", 31)}</div><div class="sb">${t("2014", 31)}</div></div>
                          <decomposition-tree></decomposition-tree>
                        </div>
                        <div class="right">
                          <div class="top2"><radar-chart></radar-chart><segment-treemap></segment-treemap></div>
                          <waterfall-chart></waterfall-chart>
                        </div>
                      </div>
                    </div>
                  </div>
                </div>
                <div class="filters">
                  ${icon(10, 11, svg`<path d="M5 1L1 5.500 5 10M9 1L5 5.500 9 10" stroke="#333" stroke-width="1.300"/>`)}
                  <div class="fi">${icon(10, 12, svg`<path d="M9 .5v11M5 2.500v7M1.200 4.500v3" stroke="#555" stroke-width="1.400"/>`)}</div>
                  <div class="fl">Filtros</div>
                </div>
              </div>
            </div>
          </div>
          <div class="status">
            ${icon(152, 14, svg`<path d="M1 6.500h5" stroke="#555" stroke-width="1.600"/><path d="M10 7h125" stroke="#605e5c" stroke-width="1.200"/><path d="M72.500 3.500v7" stroke="#605e5c" stroke-width="1.200"/><rect x="57" y=".5" width="5" height="13" fill="#605e5c"/><path d="M142 6.800h9.500M146.700 2v9.600" stroke="#555" stroke-width="1.700"/>`)}
            ${t("81%", 28.5, "pc")}
            ${icon(17, 12, svg`<rect x=".7" y=".7" width="15.600" height="10.600" rx="1.300" stroke="#555" stroke-width="1.300"/><path d="M3.300 5V3.200H5.500M11.500 3.200h2.200V5M13.700 7v1.800h-2.200M5.500 8.800H3.300V7" stroke="#3d6a94" stroke-width="1.100"/>`)}
          </div>
        </div>
      </div>

      <div class="taskbar">
        <div class="weather">
          ${icon(31, 30, svg`<defs><linearGradient id="cl" x1="0" y1="0" x2="0" y2="1"><stop stop-color="#6f9ae8"/><stop offset="1" stop-color="#b3cdf6"/></linearGradient></defs><path d="M12 .5c6 2.500 7.500 10 3 14-4 3.500-11 3-14-2 7 .5 12-4.500 11-12z" fill="#f0982c"/><path d="M7 29a6.500 6.500 0 0 1-1-12.900A9 9 0 0 1 22.500 14.500 7.300 7.300 0 0 1 24 29z" fill="url(#cl)" stroke="#6a93e0" stroke-width=".8"/>`)}
          <div>${t("17°C", 29.5)}${t("Pred. nublado", 94, "sub")}</div>
        </div>
        <div class="start">${icon(29, 29, svg`<defs><linearGradient id="wn" x1="0" y1="0" x2="1" y2="1"><stop stop-color="#4ccbfb"/><stop offset="1" stop-color="#0669c9"/></linearGradient></defs><path d="M0 1a1 1 0 0 1 1-1h12.800v13.800H0zM15.200 0H28a1 1 0 0 1 1 1v12.800H15.200zM0 15.200h13.800V29H1a1 1 0 0 1-1-1zM15.200 15.200H29V28a1 1 0 0 1-1 1H15.200z" fill="url(#wn)"/>`)}</div>
        <div class="pill">
          ${icon(19, 19, svg`<circle cx="8" cy="8" r="6.800" stroke="#222" stroke-width="2"/><path d="M12.800 12.800l5 5" stroke="#222" stroke-width="2.400"/>`)}
          ${t("Pesquisar", 72)}
          <div class="dolphin">${icon(58, 32, svg`<defs><linearGradient id="dl" x1="0" y1="0" x2="1" y2="0"><stop stop-color="#b4b6c6"/><stop offset="1" stop-color="#62659a"/></linearGradient></defs><path d="M0 28C5 21 17 17 29 17s24 4 29 11c-8 4.500-50 4.500-58 0z" fill="#2cc9e6"/><path d="M5 28.500c12-4 36-4 48 0-10 3-38 3-48 0z" fill="#86ecf6"/><path d="M16.500 8c0-2 2-2 3.500-3.500C22 1 27 .3 31 3c4.500 3.500 7.500 9 8.500 16 .5 4 .3 6.500-.5 9l-8 2c-4 .5-7.500 0-9.500-1.500-1.500-5 2-11 1.500-18.500-2 .3-6 .3-6.500-2z" fill="url(#dl)"/><path d="M23 10.500c1 5-1.500 12.500-1 17.500 2 1.500 4.500 1.800 7.500 1.500 0-6-1.500-15-4-20z" fill="#dcdbe4"/><path d="M22 20c-5 1.500-7.500 6-7 10 4-1 7-3.500 8-7zM34 19c5 2.500 7 6.500 6.500 10.500-4-1.500-7-4.500-7-7.500z" fill="#5e6190"/><circle cx="30.500" cy="9.500" r="1.800" fill="#1f2036"/>`)}</div>
        </div>
        ${apps.map((a) => html`<div class="app ${a.cls ?? ""}">${a.body}${a.mark ? html`<span class="mk ${a.mark}"></span>` : ""}</div>`)}
        <div class="tray">
          <div class="tc w41">${icon(14, 9, svg`<path d="M1 8l6-6.300L13 8" stroke="#222" stroke-width="1.600"/>`)}</div>
          <div class="tc w38 lit">${icon(21, 16, svg`<path d="M5 14.500a4.200 4.200 0 0 1-.5-8.300A6 6 0 0 1 15.500 5 4.800 4.800 0 0 1 16 14.500z" fill="#8c8c8c" stroke="#1f1f1f" stroke-width="1.400"/><path d="M3 13.500l7.500-5.500 8 4c-.5 1.200-1.300 1.800-2.500 1.800H5z" fill="#dcdcdc"/>`)}</div>
          <div class="tc w42">${icon(21, 21, svg`<path d="M1 8A9.300 9.300 0 0 1 18.500 6M19 1v5.200h-5M9 19.300A8.500 8.500 0 0 1 2.500 15M2 19.500V14.500h5" stroke="#222" stroke-width="1.300"/><circle cx="15.500" cy="15.500" r="5.200" fill="#fb9a0c"/>`)}</div>
          <div class="tc w30">${icon(21, 17, svg`<path d="M1 6.200a13.500 13.500 0 0 1 19 0M4 9.300a9.200 9.200 0 0 1 13 0M6.800 12.200a5.200 5.200 0 0 1 7.400 0" stroke="#222" stroke-width="1.400"/><circle cx="10.500" cy="14.800" r="1.600" fill="#222"/>`)}</div>
          <div class="tc w30">${icon(21, 17, svg`<path d="M1 6h3.500L9 2v13l-4.500-4H1z" stroke="#222" stroke-width="1.400" stroke-linejoin="round"/><path d="M11.500 5.800c1.300 1.500 1.300 3.900 0 5.400M14 3.600c2.500 2.700 2.500 7.100 0 9.800" stroke="#222" stroke-width="1.400"/><path d="M16.800 1.500c3.500 4 3.500 10 0 14" stroke="#b9aaa2" stroke-width="1.300"/>`)}</div>
          <div class="tc w30">${icon(21, 17, svg`<rect x="2" y="3.500" width="16" height="12" rx="2.200" stroke="#222" stroke-width="1.500"/><rect x="4.200" y="5.700" width="11.600" height="7.600" fill="#222"/><path d="M19.700 7.500v4" stroke="#222" stroke-width="2"/><path d="M4.500-.5L0 6.300h2.700L1.500 11.500 7 4.800H4.500z" fill="#222" stroke="#f0ddd3" stroke-width=".8"/>`)}</div>
          <div class="clock">${t("18:38", 35.5)}${t("12/09/2024", 76.5)}</div>
          <div class="tc w38">${icon(17, 20, svg`<path d="M8.500 1C4.800 1 2.500 4 2.500 7.300v4.700L.5 15.500c-.3.600 0 1.200.8 1.200h14.400c.8 0 1.100-.6.800-1.200L14.500 12V7.300C14.500 4 12.200 1 8.500 1zM6 17.700c.6 2.400 4.400 2.400 5 0z" fill="#003e92"/>`)}</div>
          <div class="tc w52"><span class="stack">${copilot(29)}<b class="pre">PRE</b></span></div>
        </div>
        <div class="onedrive">${t("OneDrive - Pessoal", 127)}${t("Atualizado", 71.5)}</div>
      </div>
    `;
  }
}
